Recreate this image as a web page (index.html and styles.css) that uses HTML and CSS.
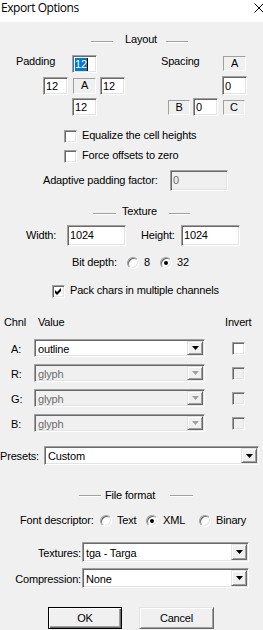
FILE: index.html
```html
<!DOCTYPE html>
<html>
<head>
<meta charset="utf-8">
<title>Export Options</title>
<link rel="stylesheet" href="styles.css">
</head>
<body>
<div class="win">
  <div class="titlebar">
    <span class="title">Export Options</span>
    <svg class="close" width="10" height="10" viewBox="0 0 10 10"><path d="M0.5 0.5 L9.5 9.5 M9.5 0.5 L0.5 9.5" stroke="#000" stroke-width="1" fill="none"/></svg>
  </div>
  <div class="dlg">
    <div class="hdr hdr-layout"><i class="ln ln-a"></i><span class="ht ht-layout">Layout</span><i class="ln ln-b"></i></div>

    <div class="row r-p1">
      <span class="lbl l-pad">Padding</span>
      <span class="edit e25 h18"><span class="sel">12</span><i class="caret"></i></span>
      <span class="lbl l-spc">Spacing</span>
      <span class="stat s-a1">A</span>
    </div>
    <div class="row r-p2">
      <span class="edit e25 h18 m-p2l">12</span>
      <span class="stat s-a2">A</span>
      <span class="edit e25 h18 m-p2r">12</span>
      <span class="edit e25 h19 m-s0">0</span>
    </div>
    <div class="row r-p3">
      <span class="edit e25 h18 m-p3">12</span>
      <span class="stat s-b">B</span>
      <span class="edit e25 h18 m-s0b">0</span>
      <span class="stat s-c">C</span>
    </div>

    <div class="row r-cb1"><span class="cb"></span><span class="lbl cbt">Equalize the cell heights</span></div>
    <div class="row r-cb2"><span class="cb"></span><span class="lbl cbt">Force offsets to zero</span></div>

    <div class="row r-adp">
      <span class="lbl l-adp">Adaptive padding factor:</span>
      <span class="edit dis e58">0</span>
    </div>

    <div class="hdr hdr-tex"><i class="ln ln-c"></i><span class="ht ht-tex">Texture</span><i class="ln ln-d"></i></div>

    <div class="row r-wh">
      <span class="lbl l-w">Width:</span>
      <span class="edit e59">1024</span>
      <span class="lbl l-h">Height:</span>
      <span class="edit e59">1024</span>
    </div>

    <div class="row r-bit">
      <span class="lbl l-bit">Bit depth:</span>
      <span class="rb"></span><span class="lbl rbt t-8">8</span>
      <span class="rb on"></span><span class="lbl rbt">32</span>
    </div>

    <div class="row r-pack">
      <span class="cb"><svg width="7" height="7" viewBox="0 0 7 7"><path d="M0 2 L2 4 L6 0 L6 3 L2 7 L0 5 Z" fill="#000"/></svg></span>
      <span class="lbl cbt">Pack chars in multiple channels</span>
    </div>

    <div class="row r-chh">
      <span class="lbl l-chnl">Chnl</span>
      <span class="lbl l-val">Value</span>
      <span class="lbl">Invert</span>
    </div>

    <div class="row r-ch r-ch-a">
      <span class="lbl l-ch">A:</span>
      <span class="combo c-ch"><span class="val">outline</span><span class="dd"><svg width="7" height="4" viewBox="0 0 7 4"><path d="M0 0 H7 L3.5 4 Z" fill="#000"/></svg></span></span>
      <span class="cb inv"></span>
    </div>
    <div class="row r-ch">
      <span class="lbl l-ch">R:</span>
      <span class="combo c-ch dis"><span class="val">glyph</span><span class="dd"><svg width="7" height="4" viewBox="0 0 7 4"><path d="M0 0 H7 L3.5 4 Z" fill="#a0a0a0"/></svg></span></span>
      <span class="cb inv dis"></span>
    </div>
    <div class="row r-ch">
      <span class="lbl l-ch">G:</span>
      <span class="combo c-ch dis"><span class="val">glyph</span><span class="dd"><svg width="7" height="4" viewBox="0 0 7 4"><path d="M0 0 H7 L3.5 4 Z" fill="#a0a0a0"/></svg></span></span>
      <span class="cb inv dis"></span>
    </div>
    <div class="row r-ch">
      <span class="lbl l-ch">B:</span>
      <span class="combo c-ch dis"><span class="val">glyph</span><span class="dd"><svg width="7" height="4" viewBox="0 0 7 4"><path d="M0 0 H7 L3.5 4 Z" fill="#a0a0a0"/></svg></span></span>
      <span class="cb inv dis"></span>
    </div>

    <div class="row r-pre">
      <span class="lbl l-pre">Presets:</span>
      <span class="combo c-pre"><span class="val">Custom</span><span class="dd"><svg width="7" height="4" viewBox="0 0 7 4"><path d="M0 0 H7 L3.5 4 Z" fill="#000"/></svg></span></span>
    </div>

    <div class="hdr hdr-file"><i class="ln ln-e"></i><span class="ht ht-file">File format</span><i class="ln ln-f"></i></div>

    <div class="row r-fd">
      <span class="lbl l-fd">Font descriptor:</span>
      <span class="rb"></span><span class="lbl rbt t-text">Text</span>
      <span class="rb on"></span><span class="lbl rbt t-xml">XML</span>
      <span class="rb"></span><span class="lbl rbt">Binary</span>
    </div>

    <div class="row r-tx">
      <span class="lbl l-right">Textures:</span>
      <span class="combo c-fmt"><span class="val">tga - Targa</span><span class="dd"><svg width="7" height="4" viewBox="0 0 7 4"><path d="M0 0 H7 L3.5 4 Z" fill="#000"/></svg></span></span>
    </div>
    <div class="row r-cmp">
      <span class="lbl l-right">Compression:</span>
      <span class="combo c-fmt"><span class="val">None</span><span class="dd"><svg width="7" height="4" viewBox="0 0 7 4"><path d="M0 0 H7 L3.5 4 Z" fill="#000"/></svg></span></span>
    </div>

    <div class="row r-btn">
      <span class="pb def">OK</span>
      <span class="pb cancel">Cancel</span>
    </div>
  </div>
</div>
</body>
</html>
```

FILE: styles.css
```css
html, body {
  margin: 0;
  padding: 0;
}
body {
  width: 263px;
  height: 630px;
  overflow: hidden;
  background: #f0f0f0;
  font: 11px/13px "Liberation Sans", Arial, sans-serif;
  letter-spacing: -0.17px;
  color: #000;
}
.win {
  width: 263px;
  height: 630px;
  overflow: hidden;
}
.titlebar {
  height: 22px;
  background: #fff;
  display: flex;
  justify-content: space-between;
  align-items: flex-start;
}
.title {
  font: 12px/15px "Open Sans", "Noto Sans", sans-serif;
  letter-spacing: -0.45px;
  margin-left: 1px;
}
.close {
  margin-top: 3px;
  margin-right: -1px;
}
.dlg {
  width: 263px;
}
.row {
  display: flex;
  align-items: flex-start;
}
.lbl {
  flex: none;
  white-space: nowrap;
  height: 13px;
}

/* group headers */
.hdr {
  display: flex;
  align-items: flex-start;
  height: 13px;
}
.ln {
  display: block;
  flex: none;
  height: 1px;
  background: #a0a0a0;
  border-bottom: 1px solid #fff;
}
.ht { flex: none; white-space: nowrap; }
.hdr-layout { margin-top: 11px; padding-left: 91px; }
.ln-a { width: 22px; margin-top: 8px; }
.ht-layout { margin-left: 12px; width: 41px; }
.ln-b { width: 22px; margin-top: 8px; }

.hdr-tex { margin-top: 14px; padding-left: 93px; }
.ln-c { width: 23px; margin-top: 8px; }
.ht-tex { margin-left: 6px; width: 47px; }
.ln-d { width: 21px; margin-top: 8px; }

.hdr-file { margin-top: 24px; padding-left: 79px; }
.ln-e { width: 22px; margin-top: 6px; }
.ht-file { margin-left: 4px; width: 65px; }
.ln-f { width: 23px; margin-top: 6px; }

/* edit boxes */
.edit {
  display: block;
  flex: none;
  box-sizing: border-box;
  height: 18px;
  background: #fff;
  border: 1px solid;
  border-color: #a0a0a0 #fff #fff #a0a0a0;
  box-shadow: inset 1px 1px #696969, inset -1px -1px #e3e3e3;
  padding: 2px 0 0 2px;
  line-height: 13px;
  white-space: nowrap;
}
.e25 { width: 25px; }
.h18 { height: 18px; }
.h19 { height: 19px; padding-top: 3px; }
.e58 { width: 58px; height: 21px; padding-top: 3px; }
.e59 { width: 59px; height: 21px; padding-top: 3px; }
.edit.dis { background: #f0f0f0; color: #6d6d6d; }
.sel {
  background: #0078d7;
  color: #fff;
  display: inline-block;
  height: 13px;
  vertical-align: top;
}
.caret {
  display: inline-block;
  width: 1px;
  height: 13px;
  background: #000;
  vertical-align: top;
}

/* static boxes */
.stat {
  display: block;
  flex: none;
  box-sizing: border-box;
  border: 1px solid;
  border-color: #a0a0a0 #fff #fff #a0a0a0;
  text-align: center;
  line-height: 13px;
}

/* padding / spacing block */
.r-p1 { margin-top: 9px; height: 18px; }
.l-pad { margin-left: 16px; width: 56px; margin-top: 0; }
.l-spc { margin-left: 64px; width: 62px; }
.s-a1 { width: 23px; height: 15px; margin-top: 1px; }

.r-p2 { margin-top: 3px; height: 19px; }
.m-p2l { margin-left: 43px; margin-top: 1px; }
.s-a2 { width: 23px; height: 16px; margin-top: 2px; margin-left: 5px; }
.m-p2r { margin-left: 4px; margin-top: 1px; }
.m-s0 { margin-left: 97px; }

.r-p3 { margin-top: 3px; height: 18px; }
.m-p3 { margin-left: 72px; }
.s-b { width: 22px; height: 15px; margin-top: 2px; margin-left: 71px; }
.m-s0b { margin-left: 3px; }
.s-c { width: 22px; height: 15px; margin-top: 2px; margin-left: 5px; }

/* checkboxes */
.cb {
  display: flex;
  align-items: center;
  justify-content: center;
  flex: none;
  box-sizing: border-box;
  width: 13px;
  height: 13px;
  margin-top: 1px;
  background: #fff;
  border: 1px solid;
  border-color: #a0a0a0 #fff #fff #a0a0a0;
  box-shadow: inset 1px 1px #696969, inset -1px -1px #e3e3e3;
}
.cb.dis { background: #f0f0f0; }
.cbt { margin-left: 5px; }
.r-cb1 { margin-top: 13px; height: 13px; padding-left: 64px; }
.r-cb2 { margin-top: 7px; height: 13px; padding-left: 64px; }

.r-adp { margin-top: 8px; height: 21px; }
.l-adp { margin-left: 43px; width: 127px; margin-top: 4px; }

/* width / height */
.r-wh { margin-top: 7px; height: 21px; }
.l-w { margin-left: 26px; width: 41px; margin-top: 4px; }
.l-h { margin-left: 15px; width: 40px; margin-top: 4px; }

/* radio buttons */
.rb {
  display: flex;
  align-items: center;
  justify-content: center;
  flex: none;
  box-sizing: border-box;
  width: 12px;
  height: 12px;
  margin-top: 1px;
  border-radius: 50%;
  background: #fff;
  border: 1px solid;
  border-color: #a0a0a0 #fff #fff #a0a0a0;
  box-shadow: inset 1px 1px #696969, inset -1px -1px #e3e3e3;
}
.rb.on::after {
  content: "";
  width: 4px;
  height: 4px;
  border-radius: 50%;
  background: #000;
}
.rbt { margin-left: 5px; }
.r-bit { margin-top: 10px; height: 13px; }
.l-bit { margin-left: 72px; width: 55px; }
.t-8 { width: 16px; }

.r-pack { margin-top: 15px; height: 13px; padding-left: 52px; }
.r-pack .cbt { margin-left: 5px; }

/* channels */
.r-chh { margin-top: 19px; height: 13px; }
.l-chnl { margin-left: 4px; width: 34px; }
.l-val { width: 187px; }

.combo {
  display: flex;
  flex: none;
  box-sizing: border-box;
  height: 18px;
  background: #fff;
  border: 1px solid;
  border-color: #a0a0a0 #fff #fff #a0a0a0;
  box-shadow: inset 1px 1px #696969, inset -1px -1px #e3e3e3;
  padding: 1px;
}
.combo.dis { background: #f0f0f0; color: #6d6d6d; }
.val {
  flex: 1;
  padding: 2px 0 0 2px;
  line-height: 13px;
  white-space: nowrap;
  overflow: hidden;
}
.dd {
  display: flex;
  align-items: center;
  justify-content: center;
  flex: none;
  width: 16px;
  box-sizing: border-box;
  background: #f0f0f0;
  border: 1px solid;
  border-color: #e3e3e3 #696969 #696969 #e3e3e3;
  box-shadow: inset 1px 1px #fff, inset -1px -1px #a0a0a0;
}
.r-ch { height: 18px; margin-top: 7px; }
.r-ch-a { margin-top: 10px; }
.l-ch { margin-left: 11px; width: 23px; margin-top: 4px; }
.c-ch { width: 171px; }
.inv { margin-left: 27px; margin-top: 3px; }

.r-pre { margin-top: 14px; height: 19px; }
.l-pre { width: 44px; margin-top: 4px; }
.c-pre { width: 215px; height: 19px; }

/* file format */
.r-fd { margin-top: 12px; height: 13px; }
.l-fd { margin-left: 20px; width: 80px; }
.t-text { width: 29px; }
.t-xml { width: 36px; }

.l-right { width: 81px; text-align: right; margin-top: 5px; }
.c-fmt { width: 167px; height: 20px; margin-left: 1px; }
.c-fmt .val { padding-top: 3px; }
.r-tx { margin-top: 15px; height: 20px; }
.r-cmp { margin-top: 6px; height: 20px; }

/* push buttons */
.r-btn { margin-top: 19px; height: 22px; }
.pb {
  display: flex;
  align-items: center;
  justify-content: center;
  flex: none;
  box-sizing: border-box;
  height: 22px;
  background: #f0f0f0;
  line-height: 13px;
}
.def {
  width: 74px;
  margin-left: 48px;
  border: 1px solid #000;
  box-shadow: inset 1px 1px #fff, inset -1px -1px #696969, inset -2px -2px #a0a0a0;
}
.cancel {
  width: 75px;
  margin-left: 17px;
  border: 1px solid;
  border-color: #e3e3e3 #696969 #696969 #e3e3e3;
  box-shadow: inset 1px 1px #fff, inset -1px -1px #a0a0a0;
}
```
